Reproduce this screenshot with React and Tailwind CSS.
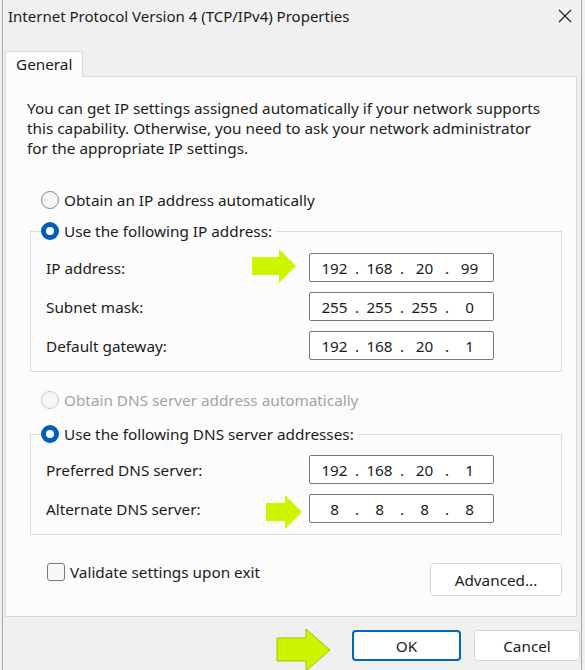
import { useState } from 'react';

function Arrow({ className, w = 44 }) {
  const head = w - 17;
  return (
    <svg className={className} width={w} height="34" viewBox={`0 0 ${w} 34`}>
      <polygon points={`0,8 ${head},8 ${head},0 ${w},17 ${head},34 ${head},26 0,26`} fill="#cdf500" />
    </svg>
  );
}

function Radio({ checked, disabled }) {
  if (checked) {
    return (
      <span className="w-[18px] h-[18px] rounded-full bg-[#005fb8] flex items-center justify-center shrink-0">
        <span className="w-[8px] h-[8px] rounded-full bg-white"></span>
      </span>
    );
  }
  return (
    <span className={`w-[18px] h-[18px] rounded-full border shrink-0 ${disabled ? 'border-[#c8c8c8] bg-[#f7f7f7]' : 'border-[#8a8a8a] bg-[#f5f5f5]'}`}></span>
  );
}

function IpField({ parts }) {
  return (
    <div className="w-[185px] h-[29px] bg-white border border-[#7a7a7a] rounded-[2px] flex items-center pl-[7px] text-[#1b1b1b]">
      {parts.map((p, i) => (
        <div key={i} className="flex items-center">
          <span className="w-[35px] text-center">{p}</span>
          {i < 3 && <span className="w-[10px] text-center">.</span>}
        </div>
      ))}
    </div>
  );
}

function Row({ label, parts, arrow, arrowW }) {
  return (
    <div className="flex items-center h-[29px]">
      <span className="flex-1">{label}</span>
      {arrow && <Arrow className={arrow} w={arrowW} />}
      <IpField parts={parts} />
    </div>
  );
}

export default function App() {
  const [validate, setValidate] = useState(false);

  return (
    <div className="w-[585px] h-[670px] bg-[#f0f0f0] overflow-hidden font-['Noto_Sans',sans-serif] text-[15.3px] leading-[20px] text-[#1b1b1b]">
      <div className="ml-[2px] w-[580px] h-full border-l border-r border-[#a9a9a9] flex flex-col">
        {/* title bar */}
        <div className="h-[32px] flex items-center justify-between pl-[5px] pr-[9px] shrink-0">
          <span className="text-[15px]">Internet Protocol Version 4 (TCP/IPv4) Properties</span>
          <svg width="14" height="14" viewBox="0 0 14 14" className="mt-[-1px]">
            <path d="M1 1 L13 13 M13 1 L1 13" stroke="#1b1b1b" strokeWidth="1.1" />
          </svg>
        </div>

        {/* tab */}
        <div className="mt-[19px] ml-[2px] shrink-0 flex">
          <div className="relative z-10 -mb-px w-[78px] h-[26px] bg-[#fcfcfc] border border-b-0 border-[#d9d9d9] pl-[10px] pb-[2px] flex items-center">
            General
          </div>
        </div>

        {/* panel */}
        <div className="ml-[2px] mr-[4px] h-[541px] shrink-0 bg-[#fcfcfc] border border-[#d9d9d9] pt-[21px] pl-[21px] pr-[14px]">
          <p>
            You can get IP settings assigned automatically if your network supports
            <br />
            this capability. Otherwise, you need to ask your network administrator
            <br />
            for the appropriate IP settings.
          </p>

          <div className="mt-[32px] ml-[14px] flex items-center gap-[5px] h-[20px]">
            <Radio />
            <span>Obtain an IP address automatically</span>
          </div>

          <div className="mt-[11px] ml-[3px]">
            <div className="relative z-10 ml-[11px] w-fit pr-[4px] bg-[#fcfcfc] flex items-center gap-[5px] h-[20px]">
              <Radio checked />
              <span>Use the following IP address:</span>
            </div>
            <div className="-mt-[10px] border border-[#dcdcdc] pt-[21px] pb-[11px] pl-[15px] pr-[67px] flex flex-col gap-[10px]">
              <Row label="IP address:" parts={['192', '168', '20', '99']} arrow="mr-[13px] mt-[-3px]" />
              <Row label="Subnet mask:" parts={['255', '255', '255', '0']} />
              <Row label="Default gateway:" parts={['192', '168', '20', '1']} />
            </div>
          </div>

          <div className="mt-[18px] ml-[14px] flex items-center gap-[5px] h-[20px] text-[#a3a3a3]">
            <Radio disabled />
            <span>Obtain DNS server address automatically</span>
          </div>

          <div className="mt-[14px] ml-[3px]">
            <div className="relative z-10 ml-[11px] w-fit pr-[4px] bg-[#fcfcfc] flex items-center gap-[5px] h-[20px]">
              <Radio checked />
              <span>Use the following DNS server addresses:</span>
            </div>
            <div className="-mt-[10px] border border-[#dcdcdc] pt-[20px] pb-[11px] pl-[15px] pr-[67px] flex flex-col gap-[10px]">
              <Row label="Preferred DNS server:" parts={['192', '168', '20', '1']} />
              <Row label="Alternate DNS server:" parts={['8', '8', '8', '8']} arrow="mr-[7px] mt-[6px]" arrowW={36} />
            </div>
          </div>

          <div className="mt-[27px] flex items-start justify-between">
            <label className="ml-[20px] flex items-center gap-[5px] h-[20px]" onClick={() => setValidate(!validate)}>
              <span className="w-[18px] h-[18px] rounded-[3px] border border-[#7a7a7a] bg-[#f7f7f7]"></span>
              <span>Validate settings upon exit</span>
            </label>
            <button className="mt-[1px] w-[132px] h-[33px] bg-white border border-[#d5d5d5] rounded-[4px]">
              Advanced...
            </button>
          </div>
        </div>

        {/* footer */}
        <div className="flex items-start justify-end pt-[11px] pr-[1px]">
          <svg width="56" height="44" viewBox="0 0 56 44" className="mr-[20px]">
            <polygon points="1,10 30,10 30,1 54,22 30,43 30,33 1,33" fill="#cdf500" stroke="#a6c000" strokeWidth="1" />
          </svg>
          <button className="w-[109px] h-[31px] bg-white border-2 border-[#0067c0] rounded-[4px] mt-[2px]">OK</button>
          <button className="ml-[13px] w-[106px] h-[31px] bg-white border border-[#d5d5d5] rounded-[4px] mt-[2px]">Cancel</button>
        </div>
      </div>
    </div>
  );
}
